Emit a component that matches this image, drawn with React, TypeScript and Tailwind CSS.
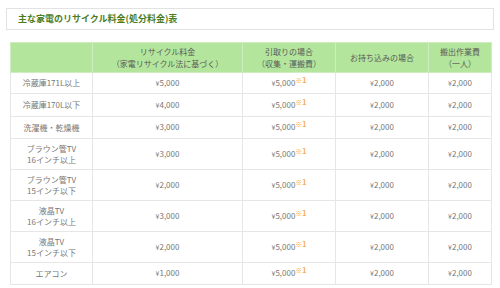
const rows: { name: string[]; fee: string; h: string }[] = [
  { name: ["冷蔵庫171L以上"], fee: "¥5,000", h: "h-[21px]" },
  { name: ["冷蔵庫170L以下"], fee: "¥4,000", h: "h-[23px]" },
  { name: ["洗濯機・乾燥機"], fee: "¥3,000", h: "h-[22px]" },
  { name: ["ブラウン管TV", "16インチ以上"], fee: "¥3,000", h: "h-[31px]" },
  { name: ["ブラウン管TV", "15インチ以下"], fee: "¥2,000", h: "h-[31px]" },
  { name: ["液晶TV", "16インチ以上"], fee: "¥3,000", h: "h-[31px]" },
  { name: ["液晶TV", "15インチ以下"], fee: "¥2,000", h: "h-[31px]" },
  { name: ["エアコン"], fee: "¥1,000", h: "h-[22px]" },
];

function Yen({ v }: { v: string }) {
  return (
    <span>
      <span className="text-[7px]">¥</span>
      {v.slice(1)}
    </span>
  );
}

export default function App() {
  return (
    <div
      className="h-[288px] w-[500px] overflow-hidden bg-white pt-[8px]"
      style={{ fontFamily: '"Noto Sans CJK JP", "Noto Sans", sans-serif' }}
    >
      <div className="mx-[6px] flex h-[22px] items-center border border-[#e2e2e2] pl-[11px]">
        <h1 className="text-[9px] font-bold text-[#4b7d1f]">
          主な家電のリサイクル料金(処分料金)表
        </h1>
      </div>

      <table className="ml-[10px] mt-[12px] w-[481px] table-fixed border-collapse text-center text-[8px] leading-[11.5px] text-[#777]">
        <colgroup>
          <col className="w-[82px]" />
          <col className="w-[150px]" />
          <col className="w-[93px]" />
          <col className="w-[93px]" />
          <col className="w-[63px]" />
        </colgroup>
        <thead>
          <tr className="h-[30px] bg-[#b3e69c] text-[#5a5a5a]">
            <th className="border border-[#cfeebf] font-normal"></th>
            <th className="border border-[#cfeebf] font-normal">
              リサイクル料金
              <br />
              （家電リサイクル法に基づく）
            </th>
            <th className="border border-[#cfeebf] font-normal">
              引取りの場合
              <br />
              （収集・運搬費）
            </th>
            <th className="border border-[#cfeebf] font-normal">お持ち込みの場合</th>
            <th className="border border-[#cfeebf] font-normal">
              搬出作業費
              <br />
              （一人）
            </th>
          </tr>
        </thead>
        <tbody>
          {rows.map((r) => (
            <tr key={r.name.join()} className={r.h}>
              <td className="border border-[#e6e6e6]">
                {r.name.map((n, i) => (
                  <div key={i}>{n}</div>
                ))}
              </td>
              <td className="border border-[#e6e6e6]">
                <Yen v={r.fee} />
              </td>
              <td className="border border-[#e6e6e6]">
                <span className="relative">
                  <Yen v="¥5,000" />
                  <span className="relative -top-[3px] text-[7px] font-bold text-[#f4a94a]">※1</span>
                </span>
              </td>
              <td className="border border-[#e6e6e6]">
                <Yen v="¥2,000" />
              </td>
              <td className="border border-[#e6e6e6]">
                <Yen v="¥2,000" />
              </td>
            </tr>
          ))}
        </tbody>
      </table>
    </div>
  );
}
